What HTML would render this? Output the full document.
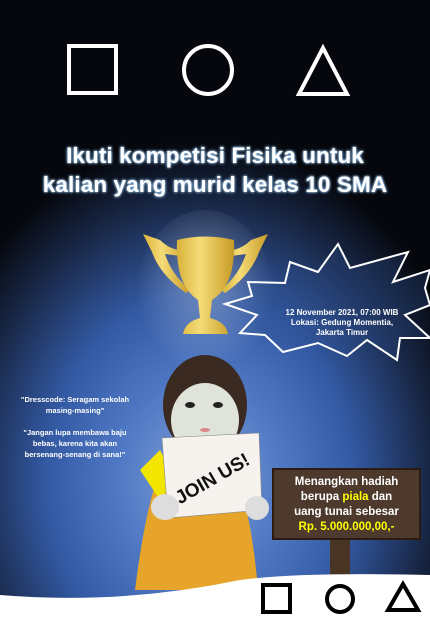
<!DOCTYPE html><html><head><style>
body{margin:0;width:430px;height:621px;overflow:hidden;font-family:"Liberation Sans",sans-serif;}
.bg{position:absolute;left:0;top:0;width:430px;height:621px;background:radial-gradient(ellipse 280px 340px at 200px 480px,#7f9fd8 0%,#4f78c4 30%,#3359a3 55%,#1a2a4c 80%,#05070c 100%),#05070c;}
.t{position:absolute;left:0;width:430px;text-align:center;color:#fff;font-weight:bold;font-size:22.5px;-webkit-text-stroke:2px #111;paint-order:stroke fill;text-shadow:0 0 3px #9cf,0 0 2px #9cf;letter-spacing:0.1px}
.s{position:absolute;color:#fff;font-size:8.5px;text-align:center;font-weight:bold}
</style></head><body><div class="bg"></div>
<svg width="430" height="621" style="position:absolute;left:0;top:0">
<defs><radialGradient id="sp" cx="50%" cy="40%" r="50%"><stop offset="0" stop-color="#fff" stop-opacity=".3"/><stop offset="1" stop-color="#fff" stop-opacity="0"/></radialGradient>
<linearGradient id="gd" x1="0" x2="1"><stop offset="0" stop-color="#d9b23a"/><stop offset=".4" stop-color="#f5dc78"/><stop offset="1" stop-color="#c79a25"/></linearGradient></defs>
<ellipse cx="205" cy="300" rx="70" ry="90" fill="url(#sp)"/>
<rect x="69" y="46" width="47" height="47" fill="none" stroke="#fff" stroke-width="4"/>
<circle cx="208" cy="70" r="24" fill="none" stroke="#fff" stroke-width="4"/>
<polygon points="323,48 347,94 299,94" fill="none" stroke="#fff" stroke-width="4"/>
<path d="M143,234 L160,240 Q168,248 178,250 L180,256 L165,254 Q172,275 190,290 L186,293 Q160,275 152,252Z" fill="url(#gd)"/>
<path d="M268,234 L251,240 Q243,248 233,250 L231,256 L246,254 Q239,275 221,290 L225,293 Q251,275 259,252Z" fill="url(#gd)"/>
<path d="M177,240 Q205,233 234,240 Q236,285 212,300 L210,318 Q226,322 228,334 L183,334 Q185,322 200,318 L198,300 Q175,285 177,240Z" fill="url(#gd)"/>
<polygon points="248,282 285,283 290,262 318,272 338,244 350,268 408,252 393,282 430,270 425,288 430,305 405,315 430,338 400,338 397,360 367,340 347,356 318,343 283,352 265,335 240,333 257,315 225,304 252,296" fill="#2f4e8e" fill-opacity=".3" stroke="#fff" stroke-width="2"/>
<path d="M160,470 Q145,510 135,590 L258,590 Q252,520 240,490 Z" fill="#e6a52a"/>
<path d="M140,470 L160,450 L175,480 L160,500 Z" fill="#f2e600"/>
<ellipse cx="205" cy="405" rx="42" ry="50" fill="#3b2a22"/>
<ellipse cx="205" cy="420" rx="34" ry="37" fill="#dfe3d9"/>
<ellipse cx="190" cy="405" rx="5" ry="3" fill="#222"/><ellipse cx="218" cy="405" rx="5" ry="3" fill="#222"/>
<ellipse cx="205" cy="430" rx="5" ry="2" fill="#d88"/>
<polygon points="162,438 259,433 262,510 168,518" fill="#f6f3ef" stroke="#888" stroke-width=".6"/>
<text x="212" y="485" font-family="Liberation Sans" font-weight="bold" font-size="19" transform="rotate(-30 212 478)" text-anchor="middle" fill="#111">JOIN US!</text>
<ellipse cx="165" cy="507" rx="14" ry="13" fill="#ddd"/><ellipse cx="257" cy="508" rx="12" ry="12" fill="#ddd"/>
<rect x="330" y="538" width="20" height="45" fill="#4a3525"/>
<rect x="273" y="469" width="147" height="70" fill="#4d3a2c" stroke="#2a1c12" stroke-width="2"/>
<path d="M0,595 Q120,605 240,580 Q300,572 430,575 L430,621 L0,621Z" fill="#fff"/>
<rect x="263" y="585" width="27" height="27" fill="none" stroke="#000" stroke-width="4"/>
<circle cx="340" cy="599" r="13" fill="none" stroke="#000" stroke-width="4"/>
<polygon points="403,584 418,610 388,610" fill="none" stroke="#000" stroke-width="4"/>
</svg>
<div class="t" style="top:143px">Ikuti kompetisi Fisika untuk</div>
<div class="t" style="top:172px">kalian yang murid kelas 10 SMA</div>
<div class="s" style="left:272px;top:308px;width:140px;line-height:10px;font-size:8px">12 November 2021, 07:00 WIB<br>Lokasi: Gedung Momentia,<br>Jakarta Timur</div>
<div class="s" style="left:5px;top:394px;width:140px;line-height:11px;font-size:7.5px">"Dresscode: Seragam sekolah<br>masing-masing"<br><br>"Jangan lupa membawa baju<br>bebas, karena kita akan<br>bersenang-senang di sana!"</div>
<div class="s" style="left:273px;top:475px;width:147px;font-size:11.5px;line-height:15px">Menangkan hadiah<br>berupa <span style="color:#ff0">piala</span> dan<br>uang tunai sebesar<br><span style="color:#ff0">Rp. 5.000.000,00,-</span></div>
</body></html>
